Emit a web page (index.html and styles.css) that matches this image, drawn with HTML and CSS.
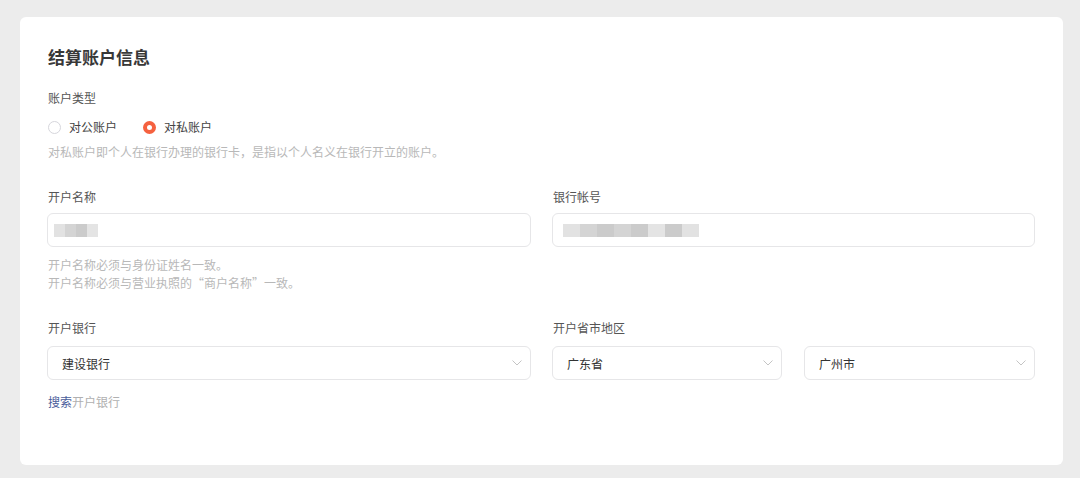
FILE: index.html
```html
<!DOCTYPE html>
<html lang="zh-CN">
<head>
<meta charset="utf-8">
<link rel="stylesheet" href="styles.css">
</head>
<body>
<div class="page">
  <section class="card">
    <h2 class="title">结算账户信息</h2>

    <div class="label">账户类型</div>
    <div class="radios">
      <label class="radio"><span class="dot"></span><span>对公账户</span></label>
      <label class="radio checked"><span class="dot"></span><span>对私账户</span></label>
    </div>
    <div class="hint">对私账户即个人在银行办理的银行卡，是指以个人名义在银行开立的账户。</div>

    <div class="grid row2">
      <div class="field">
        <div class="label">开户名称</div>
        <div class="input">
          <div class="blur">
            <span class="b b1"></span><span class="b b2"></span><span class="b b3"></span><span class="b b4"></span>
          </div>
        </div>
        <div class="hint lines">开户名称必须与身份证姓名一致。<br>开户名称必须与营业执照的“商户名称”一致。</div>
      </div>
      <div class="field">
        <div class="label">银行帐号</div>
        <div class="input">
          <div class="blur long">
            <span class="b b1"></span><span class="b b2"></span><span class="b b3"></span><span class="b b2"></span><span class="b b3"></span><span class="b b4"></span><span class="b b3"></span><span class="b b1"></span>
          </div>
        </div>
      </div>
    </div>

    <div class="grid row3">
      <div class="field">
        <div class="label">开户银行</div>
        <div class="select"><span>建设银行</span>
          <svg class="arrow" viewBox="0 0 10 6"><path d="M0.5 0.5 L5 5 L9.5 0.5" fill="none" stroke="#c4c4c4" stroke-width="1"/></svg>
        </div>
        <div class="link"><span class="blue">搜索</span>开户银行</div>
      </div>
      <div class="field">
        <div class="label">开户省市地区</div>
        <div class="pair">
          <div class="select"><span>广东省</span>
            <svg class="arrow" viewBox="0 0 10 6"><path d="M0.5 0.5 L5 5 L9.5 0.5" fill="none" stroke="#c4c4c4" stroke-width="1"/></svg>
          </div>
          <div class="select"><span>广州市</span>
            <svg class="arrow" viewBox="0 0 10 6"><path d="M0.5 0.5 L5 5 L9.5 0.5" fill="none" stroke="#c4c4c4" stroke-width="1"/></svg>
          </div>
        </div>
      </div>
    </div>
  </section>
</div>
</body>
</html>
```

FILE: styles.css
```css
* { box-sizing: border-box; }
html, body { margin: 0; padding: 0; }
body {
  background: #ececec;
  font-family: "Noto Sans CJK SC", "Noto Sans", sans-serif;
  color: #333;
  width: 1080px;
  height: 478px;
  overflow: hidden;
}
.page { padding: 17px 17px 0 20px; }
.card {
  background: #fff;
  border-radius: 6px;
  height: 448px;
  padding: 28px 28px 0 27px;
}
.title {
  margin: 0 0 19px 1px;
  font-size: 17px;
  line-height: 24px;
  font-weight: 700;
  color: #383838;
}
.label {
  font-size: 12px;
  line-height: 20px;
  color: #555;
  padding-left: 1px;
}
.radios {
  display: flex;
  gap: 26px;
  margin-top: 9px;
  padding-left: 1px;
}
.radio {
  display: flex;
  align-items: center;
  gap: 8px;
  font-size: 12px;
  line-height: 20px;
  color: #444;
}
.dot {
  width: 13px;
  height: 13px;
  border-radius: 50%;
  border: 1px solid #d6d6dc;
  background: #fff;
}
.radio.checked .dot {
  border: 4px solid #f5613f;
  background: #fff;
}
.hint {
  margin-top: 5px;
  font-size: 12px;
  line-height: 20px;
  color: #b8b8b8;
  padding-left: 1px;
}
.grid {
  display: grid;
  grid-template-columns: 484px 483px;
  column-gap: 21px;
}
.row2 { margin-top: 25px; }
.row3 { margin-top: 26px; }
.field .label { margin-bottom: 6px; }
.row3 .field .label { margin-bottom: 8px; }
.input, .select {
  height: 34px;
  border: 1px solid #e6e6e8;
  border-radius: 6px;
  background: #fff;
  display: flex;
  align-items: center;
}
.input { padding-left: 6px; }
.blur {
  display: flex;
  height: 13px;
  filter: blur(0.6px);
}
.b { display: block; height: 13px; width: 11px; }
.b1 { background: #e2e2e2; }
.b2 { background: #d4d4d4; }
.b3 { background: #cbcbcb; }
.b4 { background: #e4e4e4; }
.blur.long { padding-left: 4px; }
.blur.long .b { width: 17px; }
.hint.lines {
  margin-top: 9px;
  line-height: 18px;
}
.select {
  padding: 0 8px 0 14px;
  justify-content: space-between;
  font-size: 12px;
  color: #333;
}
.arrow { width: 10px; height: 6px; }
.pair {
  display: grid;
  grid-template-columns: 230px 231px;
  column-gap: 22px;
}
.link {
  margin-top: 12px;
  font-size: 12px;
  line-height: 20px;
  color: #b0b0b0;
  padding-left: 1px;
}
.blue { color: #4a5d9b; }
```
